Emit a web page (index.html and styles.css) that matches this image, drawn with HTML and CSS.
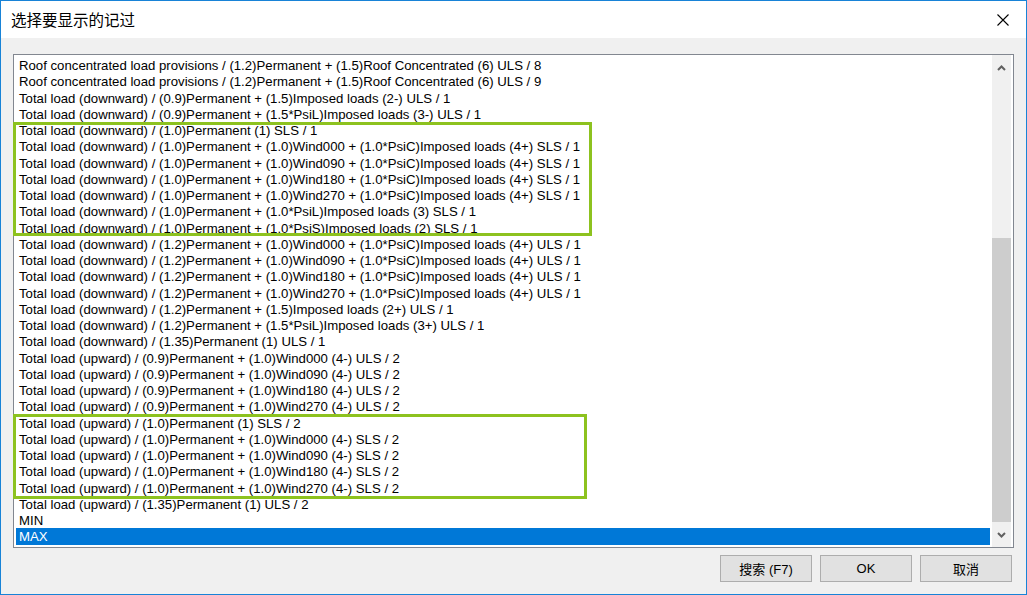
FILE: index.html
```html
<!DOCTYPE html>
<html lang="zh-CN">
<head>
  <meta charset="UTF-8" />
  <title>选择要显示的记过</title>
  <link rel="stylesheet" href="styles.css">
</head>
<body>
  <div class="dialog">
    <div class="titlebar">
      <span class="title">选择要显示的记过</span>
      <button class="close" title="Close">
        <svg width="12" height="12" viewBox="0 0 12 12">
          <path d="M0.5 0.5 L11.5 11.5 M11.5 0.5 L0.5 11.5" stroke="#000" stroke-width="1.1" fill="none"/>
        </svg>
      </button>
    </div>

    <div class="content">
      <div class="listbox">
        <ul class="items" id="items"></ul>
        <div class="scrollbar">
          <div class="arrow">
            <svg width="9" height="6" viewBox="0 0 9 6"><path d="M1 5 L4.5 1.5 L8 5" stroke="#606060" stroke-width="2" fill="none"/></svg>
          </div>
          <div class="track">
            <div class="thumb"></div>
          </div>
          <div class="arrow">
            <svg width="9" height="6" viewBox="0 0 9 6"><path d="M1 1 L4.5 4.5 L8 1" stroke="#606060" stroke-width="2" fill="none"/></svg>
          </div>
        </div>
      </div>

      <div class="buttons">
        <button class="btn">搜索 (F7)</button>
        <button class="btn">OK</button>
        <button class="btn">取消</button>
      </div>
    </div>

    <!-- marked groups -->
    <div class="mark mark-sls-down"></div>
    <div class="mark mark-sls-up"></div>
  </div>

  <script>
    const records = [
      "Roof concentrated load provisions / (1.2)Permanent + (1.5)Roof Concentrated (6) ULS / 8",
      "Roof concentrated load provisions / (1.2)Permanent + (1.5)Roof Concentrated (6) ULS / 9",
      "Total load (downward) / (0.9)Permanent + (1.5)Imposed loads (2-) ULS / 1",
      "Total load (downward) / (0.9)Permanent + (1.5*PsiL)Imposed loads (3-) ULS / 1",
      "Total load (downward) / (1.0)Permanent (1) SLS / 1",
      "Total load (downward) / (1.0)Permanent + (1.0)Wind000 + (1.0*PsiC)Imposed loads (4+) SLS / 1",
      "Total load (downward) / (1.0)Permanent + (1.0)Wind090 + (1.0*PsiC)Imposed loads (4+) SLS / 1",
      "Total load (downward) / (1.0)Permanent + (1.0)Wind180 + (1.0*PsiC)Imposed loads (4+) SLS / 1",
      "Total load (downward) / (1.0)Permanent + (1.0)Wind270 + (1.0*PsiC)Imposed loads (4+) SLS / 1",
      "Total load (downward) / (1.0)Permanent + (1.0*PsiL)Imposed loads (3) SLS / 1",
      "Total load (downward) / (1.0)Permanent + (1.0*PsiS)Imposed loads (2) SLS / 1",
      "Total load (downward) / (1.2)Permanent + (1.0)Wind000 + (1.0*PsiC)Imposed loads (4+) ULS / 1",
      "Total load (downward) / (1.2)Permanent + (1.0)Wind090 + (1.0*PsiC)Imposed loads (4+) ULS / 1",
      "Total load (downward) / (1.2)Permanent + (1.0)Wind180 + (1.0*PsiC)Imposed loads (4+) ULS / 1",
      "Total load (downward) / (1.2)Permanent + (1.0)Wind270 + (1.0*PsiC)Imposed loads (4+) ULS / 1",
      "Total load (downward) / (1.2)Permanent + (1.5)Imposed loads (2+) ULS / 1",
      "Total load (downward) / (1.2)Permanent + (1.5*PsiL)Imposed loads (3+) ULS / 1",
      "Total load (downward) / (1.35)Permanent (1) ULS / 1",
      "Total load (upward) / (0.9)Permanent + (1.0)Wind000 (4-) ULS / 2",
      "Total load (upward) / (0.9)Permanent + (1.0)Wind090 (4-) ULS / 2",
      "Total load (upward) / (0.9)Permanent + (1.0)Wind180 (4-) ULS / 2",
      "Total load (upward) / (0.9)Permanent + (1.0)Wind270 (4-) ULS / 2",
      "Total load (upward) / (1.0)Permanent (1) SLS / 2",
      "Total load (upward) / (1.0)Permanent + (1.0)Wind000 (4-) SLS / 2",
      "Total load (upward) / (1.0)Permanent + (1.0)Wind090 (4-) SLS / 2",
      "Total load (upward) / (1.0)Permanent + (1.0)Wind180 (4-) SLS / 2",
      "Total load (upward) / (1.0)Permanent + (1.0)Wind270 (4-) SLS / 2",
      "Total load (upward) / (1.35)Permanent (1) ULS / 2",
      "MIN",
      "MAX"
    ];
    const selected = "MAX";

    const list = document.getElementById("items");
    records.forEach((text) => {
      const li = document.createElement("li");
      li.className = "item";
      if (text === selected) {
        li.classList.add("selected");
      }
      li.textContent = text;
      list.appendChild(li);
    });
  </script>
</body>
</html>
```

FILE: styles.css
```css
html, body {
  margin: 0;
  padding: 0;
}
body {
  font-family: "Liberation Sans", "Noto Sans CJK SC", sans-serif;
  font-size: 13px;
  color: #000;
  background: #f0f0f0;
}
.dialog {
  position: relative;
  width: 1027px;
  height: 595px;
  box-sizing: border-box;
  border: 1px solid #1883d7;
  display: flex;
  flex-direction: column;
  overflow: hidden;
}
.titlebar {
  height: 37px;
  flex: none;
  background: #fff;
  display: flex;
  align-items: center;
  justify-content: space-between;
  padding-left: 10px;
}
.title {
  font-family: "Noto Sans CJK SC", sans-serif;
  font-size: 15.5px;
  margin-top: -1px;
}
.close {
  width: 46px;
  height: 37px;
  border: none;
  background: transparent;
  padding: 0;
  display: flex;
  align-items: center;
  justify-content: center;
  cursor: pointer;
}
.content {
  flex: 1;
  display: flex;
  flex-direction: column;
  padding: 16px 12px 12px 12px;
  background: #f0f0f0;
}
.listbox {
  height: 494px;
  box-sizing: border-box;
  border: 1px solid #828790;
  background: #fff;
  display: flex;
}
.items {
  flex: 1;
  list-style: none;
  margin: 0;
  padding: 2px 2px 0 2px;
  overflow: hidden;
  font-size: 13.2px;
}
.item {
  height: 16.25px;
  line-height: 17px;
  padding-left: 3px;
  white-space: nowrap;
}
.item.selected {
  background: #0078d7;
  color: #fff;
}
.scrollbar {
  width: 19px;
  margin-right: 2px;
  display: flex;
  flex-direction: column;
  background: #f0f0f0;
}
.arrow {
  height: 25px;
  flex: none;
  display: flex;
  align-items: center;
  justify-content: center;
}
.track {
  flex: 1;
  display: flex;
  flex-direction: column;
  justify-content: flex-end;
}
.thumb {
  height: 284px;
  background: #cdcdcd;
}
.buttons {
  display: flex;
  justify-content: flex-end;
  gap: 8px;
  margin-top: 7px;
  padding-right: 2px;
}
.btn {
  width: 92px;
  height: 27px;
  background: #e1e1e1;
  border: 1px solid #adadad;
  font-family: "Liberation Sans", "Noto Sans CJK SC", sans-serif;
  font-size: 13px;
  color: #000;
  padding: 0;
  cursor: pointer;
}
.btn:hover {
  background: #e5f1fb;
  border-color: #0078d7;
}
.mark {
  position: absolute;
  border: 3px solid #8dc21f;
  box-sizing: border-box;
  pointer-events: none;
}
.mark-sls-down {
  left: 12px;
  top: 121px;
  width: 579px;
  height: 114px;
}
.mark-sls-up {
  left: 12px;
  top: 413px;
  width: 574px;
  height: 85px;
}
```
